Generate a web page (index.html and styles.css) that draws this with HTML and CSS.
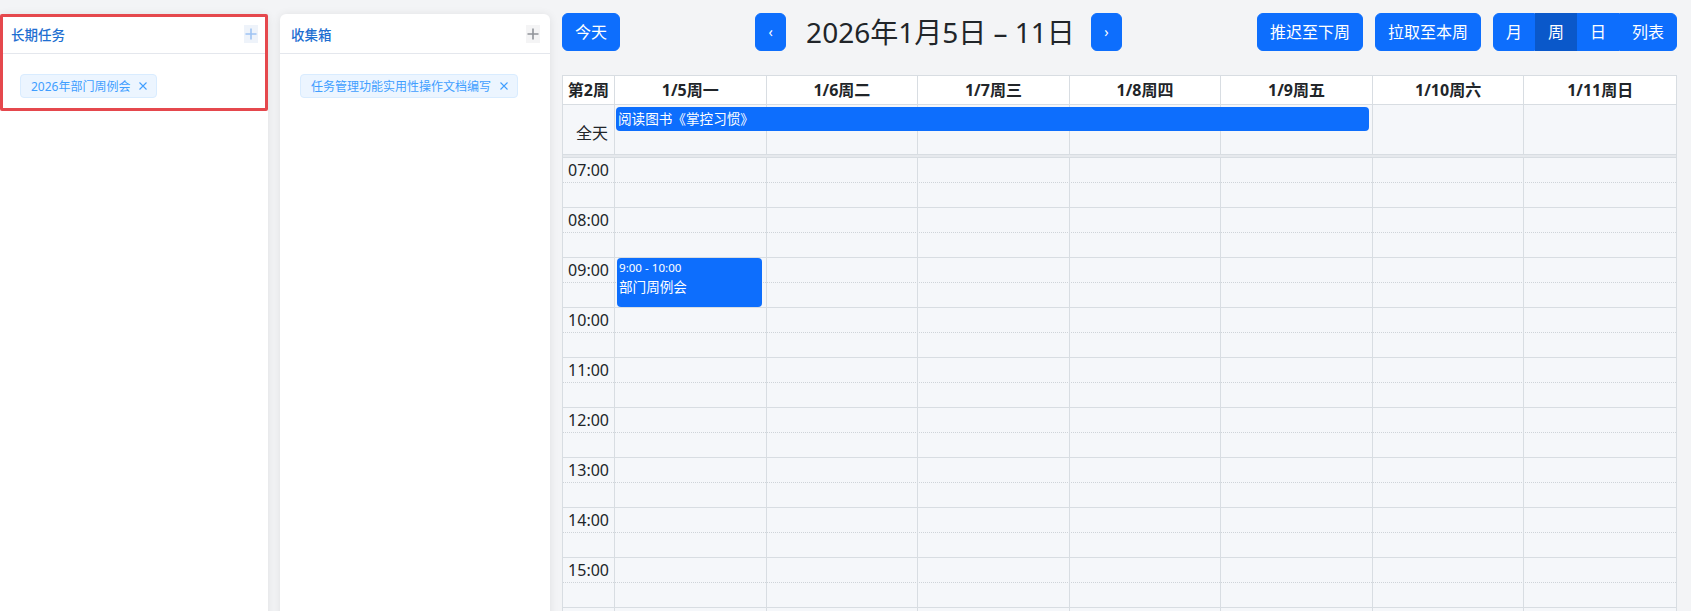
FILE: index.html
```html
<!DOCTYPE html>
<html lang="zh-CN">
<head>
  <meta charset="UTF-8" />
  <meta name="viewport" content="width=device-width, initial-scale=1" />
  <title>任务日历</title>
  <link rel="stylesheet" href="styles.css">
</head>
<body>
  <div class="app">
    <!-- 长期任务 (highlighted) -->
    <div class="panel">
      <div class="panel-focus">
        <div class="panel-head">
          <span class="panel-title">长期任务</span>
          <span class="panel-add is-hover">
            <svg width="12" height="12" viewBox="0 0 12 12"><path d="M6 0.5v11M0.5 6h11" /></svg>
          </span>
        </div>
        <div class="panel-body">
          <span class="tag">2026年部门周例会<svg class="tag-close" width="8" height="8" viewBox="0 0 8 8"><path d="M0.5 0.5l7 7M7.5 0.5l-7 7" /></svg></span>
        </div>
      </div>
    </div>

    <!-- 收集箱 -->
    <div class="panel">
      <div class="panel-head">
        <span class="panel-title">收集箱</span>
        <span class="panel-add">
          <svg width="12" height="12" viewBox="0 0 12 12"><path d="M6 0.5v11M0.5 6h11" /></svg>
        </span>
      </div>
      <div class="panel-body">
        <span class="tag">任务管理功能实用性操作文档编写<svg class="tag-close" width="8" height="8" viewBox="0 0 8 8"><path d="M0.5 0.5l7 7M7.5 0.5l-7 7" /></svg></span>
      </div>
    </div>

    <!-- Calendar -->
    <div class="calendar">
      <div class="toolbar">
        <div class="chunk">
          <button class="btn">今天</button>
        </div>
        <div class="chunk">
          <button class="btn btn-arrow">‹</button>
          <h2 class="cal-title">2026年1月5日 – 11日</h2>
          <button class="btn btn-arrow">›</button>
        </div>
        <div class="chunk">
          <button class="btn">推迟至下周</button>
          <button class="btn">拉取至本周</button>
          <div class="btn-group">
            <button class="btn">月</button>
            <button class="btn active">周</button>
            <button class="btn">日</button>
            <button class="btn">列表</button>
          </div>
        </div>
      </div>

      <div class="grid">
        <div class="head-row">
          <div class="head-cell axis">第2周</div>
          <div class="head-cell">1/5周一</div>
          <div class="head-cell">1/6周二</div>
          <div class="head-cell">1/7周三</div>
          <div class="head-cell">1/8周四</div>
          <div class="head-cell">1/9周五</div>
          <div class="head-cell">1/10周六</div>
          <div class="head-cell">1/11周日</div>
        </div>

        <div class="allday-row">
          <div class="allday-cells">
            <div class="allday-cell axis">全天</div>
            <div class="allday-cell"></div>
            <div class="allday-cell"></div>
            <div class="allday-cell"></div>
            <div class="allday-cell"></div>
            <div class="allday-cell"></div>
            <div class="allday-cell"></div>
            <div class="allday-cell"></div>
          </div>
          <!-- event layer over the day cells -->
          <div class="allday-events">
            <div class="allday-event">阅读图书《掌控习惯》</div>
          </div>
        </div>

        <div class="divider"></div>

        <div class="time-body">
          <div class="slot"><span class="slot-label">07:00</span></div>
          <div class="slot minor"></div>
          <div class="slot"><span class="slot-label">08:00</span></div>
          <div class="slot minor"></div>
          <div class="slot"><span class="slot-label">09:00</span></div>
          <div class="slot minor"></div>
          <div class="slot"><span class="slot-label">10:00</span></div>
          <div class="slot minor"></div>
          <div class="slot"><span class="slot-label">11:00</span></div>
          <div class="slot minor"></div>
          <div class="slot"><span class="slot-label">12:00</span></div>
          <div class="slot minor"></div>
          <div class="slot"><span class="slot-label">13:00</span></div>
          <div class="slot minor"></div>
          <div class="slot"><span class="slot-label">14:00</span></div>
          <div class="slot minor"></div>
          <div class="slot"><span class="slot-label">15:00</span></div>
          <div class="slot minor"></div>
          <div class="slot"></div>

          <!-- vertical day columns laid over the slots -->
          <div class="cols">
            <div class="col"></div>
            <div class="col">
              <div class="event ev-0900">
                <div class="event-time">9:00 - 10:00</div>
                <div class="event-title">部门周例会</div>
              </div>
            </div>
            <div class="col"></div>
            <div class="col"></div>
            <div class="col"></div>
            <div class="col"></div>
            <div class="col"></div>
            <div class="col"></div>
          </div>
        </div>
      </div>
    </div>
  </div>
</body>
</html>
```

FILE: styles.css
```css
/* Basic reset */
* { margin: 0; padding: 0; box-sizing: border-box; }

html, body { width: 100%; height: 100%; }

body {
  background: #f3f4f6;
  font-family: "Noto Sans", "Noto Sans CJK SC", sans-serif;
  color: #212529;
  overflow: hidden;
}

/* Page layout: two task panels + calendar */
.app {
  display: flex;
  align-items: flex-start;
  gap: 12px;
  padding: 13px 14px 0 0;
  height: 100%;
}

/* Side panels */
.panel {
  width: 268px;
  margin-top: 1px;
  height: 640px;
  background: #fff;
  border-radius: 6px;
  box-shadow: 0 1px 10px rgba(0, 0, 0, 0.09);
  flex-shrink: 0;
}
.panel + .panel { width: 270px; }

/* red highlight box around the first panel's header */
.panel-focus {
  outline: 3px solid #e5484d;
  outline-offset: -3px;
  border-radius: 2px;
}

.panel-head {
  display: flex;
  align-items: center;
  justify-content: space-between;
  height: 40px;
  padding: 0 10px 0 11px;
  border-bottom: 1px solid #e4e7ed;
}

.panel-title {
  font-size: 13.5px;
  font-weight: 500;
  color: #1f6fd1;
}

.panel-add {
  display: flex;
  align-items: center;
  justify-content: center;
  width: 14px;
  height: 18px;
  background: #f4f4f5;
}
.panel-add svg { stroke: #909399; stroke-width: 1.6; }
.panel-add.is-hover { background: #eef3fa; }
.panel-add.is-hover svg { stroke: #9ec3f3; }

.panel-body {
  padding: 20px 20px 13px;
}

/* tag chip */
.tag {
  display: inline-flex;
  align-items: center;
  height: 24px;
  padding: 0 9px 0 10px;
  font-size: 12px;
  color: #409eff;
  background: #ecf5ff;
  border: 1px solid #d9ecff;
  border-radius: 4px;
  white-space: nowrap;
}
.tag-close {
  margin-left: 9px;
  stroke: #409eff;
  stroke-width: 1.1;
}

/* Calendar */
.calendar {
  flex: 1;
  min-width: 0;
}

.toolbar {
  display: flex;
  justify-content: space-between;
  align-items: center;
  margin-bottom: 24px;
}
.chunk {
  display: flex;
  align-items: center;
  gap: 12px;
}

.btn {
  font-family: inherit;
  font-size: 16px;
  line-height: 24px;
  padding: 6px 12px;
  color: #fff;
  background: #0d6efd;
  border: 1px solid #0d6efd;
  border-radius: 6px;
  cursor: pointer;
}
.btn-arrow {
  font-size: 14px;
  padding: 6px 12px;
  width: 31px;
}
.btn-group { display: flex; }
.btn-group .btn { border-radius: 0; }
.btn-group .btn:first-child { border-radius: 6px 0 0 6px; }
.btn-group .btn:last-child { border-radius: 0 6px 6px 0; }
.btn-group .btn.active {
  background: #0a58ca;
  border-color: #0a58ca;
}

.cal-title {
  font-size: 28px;
  font-weight: 400;
  line-height: 38px;
  margin: 0 4px 0 8px;
  white-space: nowrap;
}

/* Week grid */
.grid {
  border: 1px solid #d8dde2;
  background: #f5f7fa;
}

.head-row,
.allday-cells,
.allday-events,
.cols {
  display: grid;
  grid-template-columns: 52px repeat(7, 1fr);
}

.head-row {
  background: #fff;
  border-bottom: 1px solid #d8dde2;
}
.head-cell {
  padding: 2px 4px;
  font-size: 16px;
  font-weight: 700;
  line-height: 24px;
  text-align: center;
  border-right: 1px solid #d8dde2;
  white-space: nowrap;
}
.head-cell:last-child { border-right: none; }
.head-cell.axis { text-align: right; padding: 2px 5px 2px 2px; }

.allday-row {
  position: relative;
  border-bottom: 1px solid #d8dde2;
}
.allday-cells { height: 49px; }
.allday-cell { border-right: 1px solid #d8dde2; }
.allday-cell:last-child { border-right: none; }
.allday-cell.axis {
  display: flex;
  align-items: center;
  justify-content: flex-end;
  padding: 4px 6px 0 0;
  font-size: 16px;
}

.allday-events {
  position: absolute;
  inset: 0;
  align-items: start;
}
.allday-event {
  grid-column: 2 / 7;
  height: 24px;
  margin: 2px 4px 0 1px;
  padding: 0 2px;
  font-size: 13.6px;
  line-height: 23px;
  color: #fff;
  background: #0d6efd;
  border-radius: 4px;
  white-space: nowrap;
}

.divider {
  height: 3px;
  background: #e6e9ed;
  border-bottom: 1px solid #d8dde2;
}

/* time slots */
.time-body {
  position: relative;
}
.slot {
  height: 25px;
  border-bottom: 1px dotted #cfd4d9;
}
.slot.minor {
  border-bottom: 1px solid #d8dde2;
}
.slot-label {
  display: block;
  width: 52px;
  padding-right: 6px;
  text-align: right;
  font-size: 16px;
  line-height: 24px;
}

/* day columns over the slot rows */
.cols {
  position: absolute;
  inset: 0;
}
.col {
  position: relative;
  border-right: 1px solid #d8dde2;
}
.col:last-child { border-right: none; }

.event {
  position: absolute;
  left: 2px;
  right: 4px;
  padding: 1px 2px;
  color: #fff;
  background: #0d6efd;
  border-radius: 4px;
}
.ev-0900 { top: 100px; height: 49px; }
.event-time {
  font-size: 11.6px;
  line-height: 17px;
  margin-bottom: 1px;
}
.event-title {
  font-size: 13.6px;
  line-height: 20px;
}
```
